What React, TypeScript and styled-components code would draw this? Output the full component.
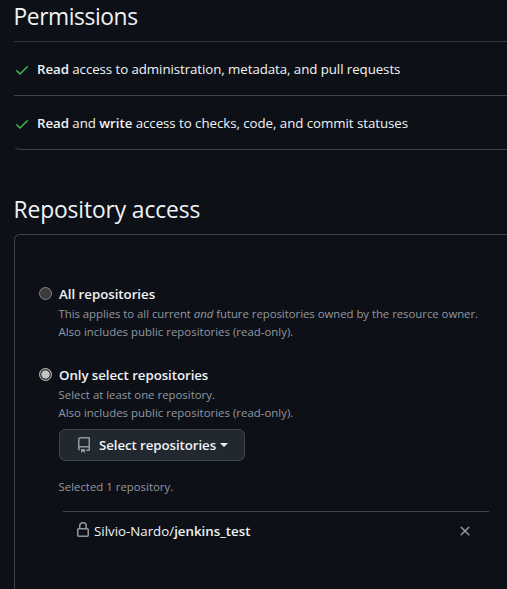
import React, { useState } from "react";
import styled, { createGlobalStyle } from "styled-components";

const GlobalStyle = createGlobalStyle`
  *, *::before, *::after { box-sizing: border-box; }
  body {
    margin: 0;
    background: #0d1117;
    color: #f0f3f6;
    font-family: "Open Sans", "Noto Sans", sans-serif;
    font-size: 13.3px;
    line-height: 20px;
  }
  b { font-weight: 600; }
`;

const Page = styled.main`
  height: 589px;
  padding: 1px 0 0 14px;
  overflow: hidden;
  display: flex;
  flex-direction: column;
  white-space: nowrap;
`;

const Heading = styled.h2<{ $tracking: string }>`
  margin: 0 0 0 -0.5px;
  font-size: 22.8px;
  line-height: 32px;
  font-weight: 400;
  letter-spacing: ${(p) => p.$tracking};
`;

const PermissionList = styled.ul`
  list-style: none;
  margin: 8px 0 44px;
  padding: 0;
`;

const PermissionItem = styled.li<{ $tracking: string }>`
  height: 54px;
  padding-top: 1px;
  border-top: 1px solid #3d444d;
  display: flex;
  align-items: center;
  gap: 7px;
  letter-spacing: ${(p) => p.$tracking};

  &:first-child { border-top-color: #30363d; }
  &:last-child {
    height: 55px;
    border-bottom: 1px solid #3d444d;
    border-bottom-left-radius: 6px;
  }
  svg { position: relative; top: 1px; }
`;

const Panel = styled.section`
  flex: 1;
  margin-top: 8px;
  padding: 49px 18px 0 24px;
  border: solid #3d444d;
  border-width: 1px 0 0 1px;
  border-top-left-radius: 6px;
`;

const Option = styled.div`
  display: grid;
  grid-template-columns: 13px 1fr;
  column-gap: 7px;
`;

const Radio = styled.input`
  appearance: none;
  width: 13px;
  height: 13px;
  margin: 3px 0 0;
  border: 1px solid #858585;
  border-radius: 50%;
  background: #3b3b3b;

  &:checked {
    border-color: #c3c3c3;
    background: radial-gradient(circle, #c3c3c3 3.7px, #3b3b3b 4.5px);
  }
`;

const OptionLabel = styled.label<{ $tracking?: string }>`
  font-weight: 600;
  letter-spacing: ${(p) => p.$tracking ?? "0"};
`;

const Note = styled.p<{ $gap?: number; $tracking?: string }>`
  margin: ${(p) => p.$gap ?? 0}px 0 0 -0.5px;
  color: #9198a1;
  font-size: 11.4px;
  line-height: 18px;
  letter-spacing: ${(p) => p.$tracking ?? "0"};
`;

const OptionBody = styled.div`
  grid-column: 2;
`;

const SecondOption = styled(Option)`
  margin-top: 24px;
`;

const SelectButton = styled.button`
  width: 186px;
  height: 32px;
  margin-top: 7px;
  padding: 0 16px;
  display: flex;
  align-items: center;
  border: 1px solid #3d444d;
  border-radius: 6px;
  background: #212830;
  color: #f0f3f6;
  font: inherit;
  font-weight: 600;
  letter-spacing: -0.08px;

  svg { margin-right: 7px; }
`;

const Caret = styled.span`
  margin-left: 4px;
  border: 4px solid transparent;
  border-top-color: currentColor;
  border-bottom-width: 0;
`;

const SelectedRow = styled.div`
  margin: 15px 0 0 4px;
  padding: 9px 16px 0 12px;
  border-top: 1px solid #3d444d;
  display: flex;
  align-items: center;

  & > span { flex: 1; margin-left: 3px; }
`;

const RemoveButton = styled.button`
  display: flex;
  padding: 0;
  border: 0;
  background: none;
`;

const Glyph = styled.svg<{ $lift?: number }>`
  flex: none;
  display: block;
  width: 16px;
  height: 16px;
  margin-top: ${(p) => -(p.$lift ?? 0)}px;
`;

const paths = {
  check:
    "M13.78 4.22a.75.75 0 0 1 0 1.06l-7.25 7.25a.75.75 0 0 1-1.06 0L2.22 9.28a.751.751 0 0 1 .018-1.042.751.751 0 0 1 1.042-.018L6 10.94l6.72-6.72a.75.75 0 0 1 1.06 0Z",
  repo:
    "M2 2.5A2.5 2.5 0 0 1 4.5 0h8.75a.75.75 0 0 1 .75.75v12.5a.75.75 0 0 1-.75.75h-2.5a.75.75 0 0 1 0-1.5h1.75v-2h-8a1 1 0 0 0-.714 1.7.75.75 0 1 1-1.072 1.05A2.495 2.495 0 0 1 2 11.5Zm10.5-1h-8a1 1 0 0 0-1 1v6.708A2.486 2.486 0 0 1 4.5 9h8ZM5 12.25a.25.25 0 0 1 .25-.25h3.5a.25.25 0 0 1 .25.25v3.25a.25.25 0 0 1-.4.2l-1.45-1.087a.249.249 0 0 0-.3 0L5.4 15.7a.25.25 0 0 1-.4-.2Z",
  lock:
    "M4 4a4 4 0 0 1 8 0v2h.25c.966 0 1.75.784 1.75 1.75v5.5A1.75 1.75 0 0 1 12.25 15h-8.5A1.75 1.75 0 0 1 2 13.25v-5.5C2 6.784 2.784 6 3.75 6H4Zm8.25 3.5h-8.5a.25.25 0 0 0-.25.25v5.5c0 .138.112.25.25.25h8.5a.25.25 0 0 0 .25-.25v-5.5a.25.25 0 0 0-.25-.25ZM10.5 6V4a2.5 2.5 0 1 0-5 0v2Z",
  x: "M3.72 3.72a.75.75 0 0 1 1.06 0L8 6.94l3.22-3.22a.749.749 0 0 1 1.275.326.749.749 0 0 1-.215.734L9.06 8l3.22 3.22a.749.749 0 0 1-.326 1.275.749.749 0 0 1-.734-.215L8 9.06l-3.22 3.22a.751.751 0 0 1-1.042-.018.751.751 0 0 1-.018-1.042L6.94 8 3.72 4.78a.75.75 0 0 1 0-1.06Z",
};

function Icon({ name, color = "#9198a1", lift }: { name: keyof typeof paths; color?: string; lift?: number }) {
  return (
    <Glyph viewBox="0 0 16 16" fill={color} $lift={lift} aria-hidden>
      <path d={paths[name]} />
    </Glyph>
  );
}

export default function App() {
  const [scope, setScope] = useState<"all" | "selected">("selected");

  return (
    <>
      <GlobalStyle />
      <Page>
        <Heading $tracking="-0.42px">Permissions</Heading>
        <PermissionList>
          <PermissionItem $tracking="-0.07px">
            <Icon name="check" color="#3fb950" />
            <span>
              <b>Read</b> access to administration, metadata, and pull requests
            </span>
          </PermissionItem>
          <PermissionItem $tracking="-0.05px">
            <Icon name="check" color="#3fb950" />
            <span>
              <b>Read</b> and <b>write</b> access to checks, code, and commit statuses
            </span>
          </PermissionItem>
        </PermissionList>

        <Heading $tracking="-0.12px">Repository access</Heading>
        <Panel>
          <Option>
            <Radio type="radio" id="all" name="scope" checked={scope === "all"} onChange={() => setScope("all")} />
            <OptionLabel htmlFor="all" $tracking="-0.03px">
              All repositories
            </OptionLabel>
            <OptionBody>
              <Note $gap={1} $tracking="-0.04px">
                This applies to all current <i>and</i> future repositories owned by the resource owner.
              </Note>
              <Note $tracking="0.02px">Also includes public repositories (read-only).</Note>
            </OptionBody>
          </Option>

          <SecondOption>
            <Radio
              type="radio"
              id="selected"
              name="scope"
              checked={scope === "selected"}
              onChange={() => setScope("selected")}
            />
            <OptionLabel htmlFor="selected" $tracking="-0.07px">
              Only select repositories
            </OptionLabel>
            <OptionBody>
              <Note $gap={1}>Select at least one repository.</Note>
              <Note $tracking="0.02px">Also includes public repositories (read-only).</Note>
              <SelectButton type="button">
                <Icon name="repo" />
                Select repositories
                <Caret />
              </SelectButton>
              <Note $gap={17}>Selected 1 repository.</Note>
              <SelectedRow>
                <Icon name="lock" lift={2} />
                <span>
                  Silvio-Nardo/<b>jenkins_test</b>
                </span>
                <RemoveButton type="button" aria-label="Remove repository">
                  <Icon name="x" />
                </RemoveButton>
              </SelectedRow>
            </OptionBody>
          </SecondOption>
        </Panel>
      </Page>
    </>
  );
}
